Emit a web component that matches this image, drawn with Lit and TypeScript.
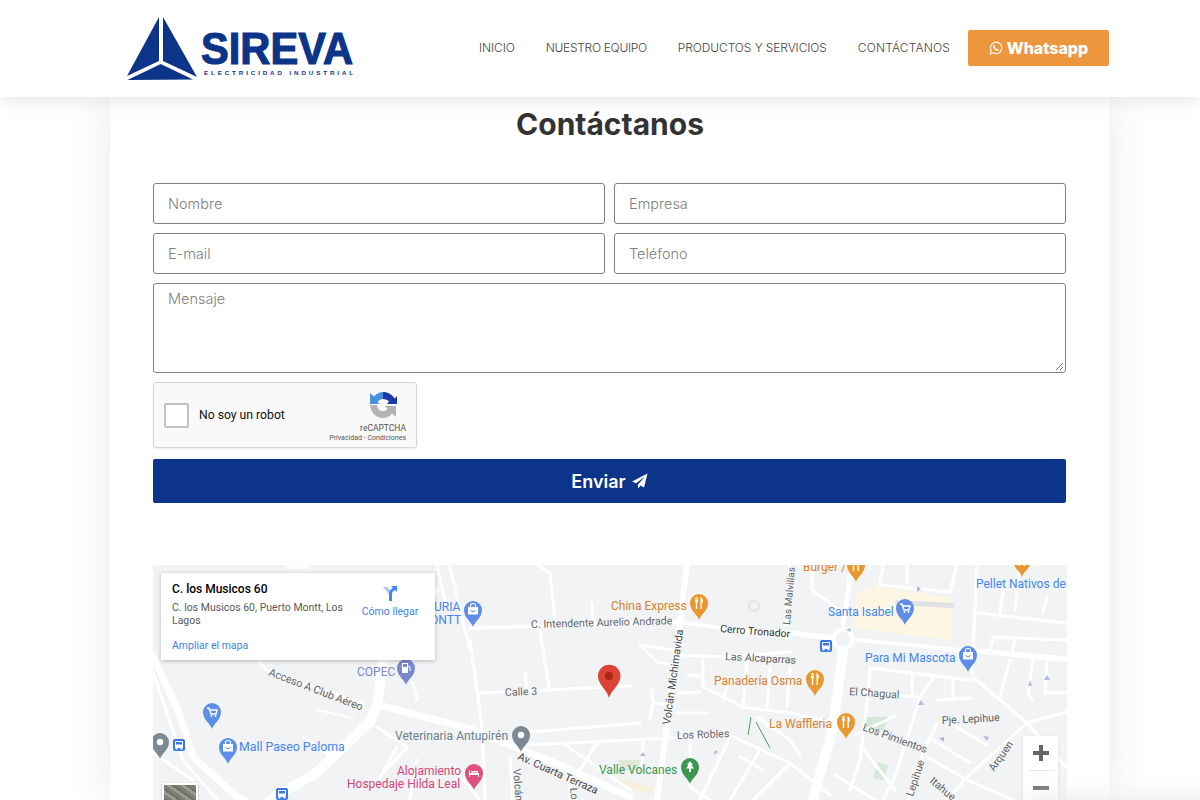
import { LitElement, html, svg, css } from "lit";
import { customElement } from "lit/decorators.js";

const roads: [number, string][] = [
  [7, "M153 657L180 715L193 757L237 797L245 800"],
  [3, "M153 672L183 760L217 800"],
  [3, "M153 753L193 780"],
  [10, "M383 660L377 705L370 722L316 773L270 800"],
  [5, "M383 660L420 625L437 590"],
  [3, "M450 567L460 610L470 650"],
  [3, "M437 565L447 610"],
  [7, "M383 706L470 729L560 765L630 797"],
  [6, "M687 565L680 622L667 727L657 800"],
  [4, "M470 628L680 622L790 638"],
  [5, "M780 632L833 638"],
  [4, "M857 640L1066 660"],
  [10, "M843 650L833 727L813 800"],
  [5, "M852 565L843 625"],
  [3, "M480 693L630 686"],
  [3, "M525 672L527 690"],
  [3, "M538 565L550 573L555 620"],
  [3, "M540 630L549 688"],
  [3, "M592 603L593 622"],
  [3, "M470 640L482 727L485 800"],
  [3, "M530 732L640 723"],
  [3, "M527 745L670 738L730 735L790 763L830 795"],
  [3, "M640 645L657 662L670 665"],
  [3, "M640 645L673 650M680 655L725 657L790 652"],
  [3, "M703 660L703 687L743 707L790 713L832 722"],
  [3, "M688 675L703 677"],
  [3, "M747 660L743 707M770 667L767 707M790 667L787 707M727 687L723 700"],
  [3, "M652 690L653 703L650 718M655 703L667 705M677 713L708 713M678 693L700 692"],
  [3, "M757 717L790 740L800 755"],
  [3, "M730 737L700 800M760 750L730 800M790 763L753 800M740 757L763 770"],
  [3, "M690 740L690 787L710 800"],
  [3, "M597 743L580 770M643 742L642 767M563 743L630 790"],
  [3, "M510 757L513 800M570 780L570 800"],
  [3, "M870 670L867 703L860 760L850 790"],
  [3, "M870 668L970 680"],
  [3, "M912 673L912 695M867 693L917 697"],
  [3, "M933 678L920 697L895 777L883 800"],
  [3, "M953 680L953 697M937 700L972 698"],
  [3, "M973 677L1027 723L1066 767"],
  [3, "M1027 723L967 777L947 800"],
  [3, "M937 723L920 760L908 800M950 723L987 745M933 740L970 763M927 757L967 780L1013 800"],
  [3, "M1027 723L1066 712M1010 660L1000 697"],
  [3, "M977 567L972 673"],
  [3, "M977 613L1066 623"],
  [3, "M993 637L1066 640M993 637L990 650M1015 640L1012 653"],
  [3, "M977 650L1066 658"],
  [3, "M1033 660L1028 693L1032 700M1047 660L1045 693L1066 693"],
  [3, "M1047 597L1043 613M1003 590L1000 613"],
  [3, "M883 565L880 585L950 592L957 565M907 565L907 583"],
  [3, "M1020 565L1015 610"],
  [3, "M790 565L786 625M812 565L812 590L840 610"],
  [3, "M855 735L895 716"],
  [3, "M860 745L895 790M835 775L875 800"],
  [3, "M260 663L270 673L363 703"],
  [2, "M317 710L353 718"],
  [3, "M303 737L337 760"],
  [3, "M377 727L407 747L383 773M397 747L377 783M417 760L410 800"],
  [3, "M413 683L417 700"],
  [3, "M287 567L307 567"],
  [3, "M455 770L480 800"],
];

function pin(x: number, y: number, color: string, glyph = "") {
  return svg`<g transform="translate(${x} ${y})">
    <path fill=${color} d="M0 17C-1.5 11.5-9 8-9 0A9 9 0 0 1 9 0C9 8 1.5 11.5 0 17Z"></path>
    ${glyph === "cart" ? svg`<path fill="none" stroke="#fff" stroke-width="1.4" d="M-5-4H-3L-1 2H4L5-2H-2.500"></path><circle cx="-.5" cy="4" r=".9" fill="#fff"></circle><circle cx="3.500" cy="4" r=".9" fill="#fff"></circle>` : ""}
    ${glyph === "bag" ? svg`<path fill="#fff" d="M-5-3H5V4.500H-5Z"></path><path fill="none" stroke="#fff" stroke-width="1.200" d="M-2.500-3V-4.500A2.500 2 0 0 1 2.500-4.500V-3"></path><path fill="none" stroke=${color} d="M-2.500 0.500Q0 3 2.500 0.500"></path>` : ""}
    ${glyph === "food" ? svg`<path fill="#fff" d="M-4-6H-3.400V-3H-2.800V-6H-2.200V-3H-1.600V-6H-1V-2C-1-1-1.500-.8-1.800-.6V6H-3.200V-.6C-3.500-.8-4-1-4-2ZM1.500 6V-6C3.500-5.500 4-3 4-.5H2.900V6Z"></path>` : ""}
    ${glyph === "dot" ? svg`<circle r="3.200" fill="#fff"></circle>` : ""}
    ${glyph === "tree" ? svg`<path fill="#fff" d="M0-6L3 -2H1.500L4 1.500H1V5H-1V1.500H-4L-1.500-2H-3Z"></path>` : ""}
    ${glyph === "bed" ? svg`<path fill="#fff" d="M-5-3H-4V0H5V4H4V2H-4V4H-5ZM-3-2H4V-.5H-3Z"></path>` : ""}
    ${glyph === "fuel" ? svg`<path fill="#fff" d="M-4-5H2V5H-4Z"></path><path fill=${color} d="M-3-4H1V-1H-3Z"></path><path fill="none" stroke="#fff" d="M2-2L4-1V3"></path>` : ""}
  </g>`;
}

function bus(x: number, y: number) {
  return svg`<g transform="translate(${x} ${y})">
    <rect x="-6" y="-6" width="12" height="12" rx="2" fill="#3b78e7"></rect>
    <rect x="-4" y="-4" width="8" height="7" rx="1" fill="#fff"></rect>
    <rect x="-3" y="-3" width="6" height="2.500" fill="#3b78e7"></rect>
    <rect x="-3.500" y="3" width="2" height="1.500" fill="#fff"></rect>
    <rect x="1.500" y="3" width="2" height="1.500" fill="#fff"></rect>
  </g>`;
}

const BLUE = "#4285f4";
const PINB = "#5e8ee8";
const ORG = "#d9822b";
const PINO = "#e8982f";
const GREY = "#5f6368";

type Label = [string, number, number, string, number?, number?];
const labels: Label[] = [
  ["URIA", 434, 611, BLUE, 12],
  ["ONTT", 430, 624, BLUE, 12],
  ["COPEC", 357, 676, "#7b88cc", 12],
  ["Mall Paseo Paloma", 239, 751, BLUE, 12.3],
  ["Veterinaria Antupirén", 395, 740, "#6b7f8c", 12.1],
  ["Alojamiento", 397, 775, "#d9447a", 12],
  ["Hospedaje Hilda Leal", 347, 788, "#d9447a", 12],
  ["China Express", 611, 610, ORG, 12],
  ["Panadería Osma", 714, 685, ORG, 12],
  ["La Waffleria", 769, 728, ORG, 12],
  ["Valle Volcanes", 599, 774, "#3c9650", 12],
  ["Burger /", 803, 571, ORG, 12],
  ["Santa Isabel", 828, 616, BLUE, 12],
  ["Para Mi Mascota", 865, 662, BLUE, 12],
  ["Pellet Nativos de", 976, 588, BLUE, 12],
  ["C. Intendente Aurelio Andrade", 531, 628, GREY, 10.7, -1.5],
  ["Cerro Tronador", 720, 632, "#333", 10.5, 4.5],
  ["Las Alcaparras", 725, 660, GREY, 10.7, 3],
  ["Calle 3", 505, 696, GREY, 10.7, -2],
  ["Los Robles", 677, 739, GREY, 10.7, -2],
  ["El Chagual", 849, 695, GREY, 10.7, 4],
  ["Los Pimientos", 862, 730, GREY, 10.7, 20],
  ["Pje. Lepihue", 942, 724, GREY, 10.7, -3],
  ["Acceso A Club Aéreo", 268, 675, GREY, 10.7, 21],
  ["Av. Cuarta Terraza", 517, 759, "#444", 10.7, 24],
  ["Volcán Michimavida", 670, 725, "#444", 10.7, -82],
  ["Las Malvillas", 790, 625, GREY, 10, -85],
  ["Lepihue", 913, 797, GREY, 10.7, -72],
  ["Itahue", 929, 782, GREY, 10.7, 40],
  ["Arquen", 994, 772, GREY, 10.7, -55],
  ["Volcán", 513, 769, GREY, 10.7, 85],
  ["Lo", 570, 788, GREY, 10.7, 85],
];

@customElement("app-root")
export class AppRoot extends LitElement {
  static styles = css`
    :host { display: block; height: 800px; overflow: hidden; background: #fff; font-family: "Inter", "Liberation Sans", sans-serif; position: relative; }
    header { position: relative; z-index: 2; height: 97px; background: #fff; box-shadow: 0 2px 20px rgba(0,0,0,.11); display: flex; align-items: center; padding: 0 91px 2px 126px; box-sizing: border-box; }
    .logo { display: block; width: 230px; height: 70px; margin-top: -1px; }
    .logo-name { font-family: "Liberation Sans", sans-serif; font-weight: 700; font-size: 44.500px; fill: #0c3489; stroke: #0c3489; stroke-width: 1.2px; }
    .logo-sub { font-family: "Liberation Sans", sans-serif; font-weight: 700; font-size: 6.2px; fill: #0c3489; letter-spacing: 2.9px; }
    nav { margin-left: auto; display: flex; align-items: center; font-size: 12px; font-weight: 300; color: #444; letter-spacing: -.1px; }
    nav a { white-space: nowrap; }
    nav a + a { margin-left: 31px; }
    nav a:nth-child(2) { letter-spacing: -.3px; }
    nav a:nth-child(4) { letter-spacing: .15px; }
    .wa { margin-left: 18px; width: 141px; height: 36px; background: #ec973e; border-radius: 2px; color: #fff; font-weight: 800; font-size: 16px; letter-spacing: 0; display: flex; align-items: center; justify-content: center; gap: 4px; }
    .wa svg { width: 14px; height: 14px; }
    main { width: 999px; margin: 0 0 0 110px; height: 703px; padding: 0 42px 0 43px; box-sizing: border-box; background: #fff; box-shadow: 0 0 45px rgba(0,0,0,.09); position: relative; z-index: 1; }
    h1 { margin: 0; padding-top: 8px; height: 86px; box-sizing: border-box; text-align: center; font-size: 30px; font-weight: 700; line-height: 38px; color: #333; }
    form { display: grid; grid-template-columns: 452px 452px; column-gap: 9px; row-gap: 9px; }
    .field { height: 41px; box-sizing: border-box; border: 1px solid #7a8188; border-radius: 3px; padding: 0 14px; display: flex; align-items: center; color: #808080; font-size: 14.500px; font-weight: 300; }
    .area { grid-column: 1 / 3; height: 90px; align-items: flex-start; padding-top: 6px; position: relative; }
    .grip { position: absolute; right: 1px; bottom: 1px; width: 9px; height: 9px; }
    .captcha { grid-column: 1 / 3; width: 264px; height: 66px; box-sizing: border-box; background: #f9f9f9; border: 1px solid #d6d6d6; border-radius: 3px; box-shadow: 0 1px 2px rgba(0,0,0,.08); display: flex; align-items: center; padding-left: 10px; font-family: Roboto, sans-serif; }
    .check { width: 25px; height: 25px; box-sizing: border-box; border: 2px solid #c1c1c1; border-radius: 2px; background: #fff; }
    .robot { margin-left: 10px; font-size: 12.200px; color: #111; }
    .rc { margin-left: auto; margin-right: 10px; width: 60px; display: flex; flex-direction: column; align-items: flex-end; color: #555; font-size: 8.500px; line-height: 10px; padding-top: 3px; }
    .rc svg { width: 30px; height: 30px; margin: 0 8px 3px 0; }
    .rc small { font-size: 7px; line-height: 9px; white-space: nowrap; margin-top: 1px; }
    .send { grid-column: 1 / 3; height: 44px; margin-top: 2px; background: #0c348a; border-radius: 2px; color: #fff; display: flex; align-items: center; justify-content: center; gap: 6px; font-size: 18px; font-weight: 600; }
    .send svg { width: 16px; height: 16px; }
    .map { position: relative; margin-top: 62px; width: 914px; height: 235px; overflow: hidden; background: #f1f3f4; }
    .map > svg { display: block; font-family: Roboto, sans-serif; }
    .info { position: absolute; left: 8px; top: 8px; width: 274px; height: 87px; box-sizing: border-box; background: #fff; box-shadow: 0 1px 4px rgba(0,0,0,.25); padding: 9px 11px; font-family: Roboto, sans-serif; font-size: 10.500px; line-height: 12.500px; color: #5b5b5b; }
    .info b { display: block; font-size: 12px; font-weight: 500; color: #000; line-height: 14px; margin-bottom: 6px; }
    .addr { width: 180px; }
    .info a { display: block; color: #3f7fe8; }
    .big { margin-top: 13px; }
    .dir { position: absolute; left: 196px; top: 12px; width: 66px; text-align: center; }
    .dir svg { display: block; width: 18px; height: 18px; margin: 0 auto 3px; }
    .zoom { position: absolute; left: 870px; top: 171px; width: 35px; height: 70px; background: #fff; box-shadow: 0 1px 3px rgba(0,0,0,.12); display: flex; flex-direction: column; align-items: center; }
    .zoom svg { width: 18px; height: 18px; }
    .zoom i { width: 24px; height: 1px; background: #e6e6e6; margin: 8px 0; }
    .zoom svg:first-child { margin-top: 8px; }
    .thumb { position: absolute; left: 9px; top: 218px; width: 36px; height: 36px; box-sizing: border-box; border: 2px solid #fff; background: repeating-linear-gradient(35deg, #7f7d70 0 3px, #9a9a8e 3px 6px, #6f6f66 6px 8px); box-shadow: 0 1px 2px rgba(0,0,0,.3); }
    .veil { position: absolute; z-index: 3; left: 1030px; top: 800px; width: 220px; height: 40px; box-shadow: 0 0 24px 3px #ececec; background: #ececec; }
  `;

  render() {
    return html`
      <header>
        <svg class="logo" viewBox="126 12 230 70" role="img" aria-label="Sireva">
          <path fill="#0c3489" d="M159 17V61L127 76ZM163 17V61L197 77ZM160.700 64L193 79.500L127.500 80Z"></path>
          <text class="logo-name" x="201" y="64" textLength="152" lengthAdjust="spacingAndGlyphs">SIREVA</text>
          <text class="logo-sub" x="204" y="75">ELECTRICIDAD INDUSTRIAL</text>
        </svg>
        <nav>
          <a>INICIO</a><a>NUESTRO EQUIPO</a><a>PRODUCTOS Y SERVICIOS</a><a>CONTÁCTANOS</a>
          <div class="wa">
            <svg viewBox="0 0 16 16" fill="none" stroke="#fff" stroke-width="1.300"><path d="M1.500 14.500L2.500 11A6.500 6.500 0 1 1 5 13.500Z"></path><path fill="#fff" stroke="none" d="M5.800 4.500C6.500 4.200 6.800 5.800 7 6.300L6.500 7.300C7 8.200 7.800 9 8.800 9.400L9.700 8.600L11.200 9.500C11.200 10.500 10 11.300 9 11C6.800 10.500 5 8.500 4.500 6.500C4.400 5.700 5 4.700 5.800 4.500Z"></path></svg>
            Whatsapp
          </div>
        </nav>
      </header>
      <main>
        <h1>Contáctanos</h1>
        <form>
          <div class="field">Nombre</div>
          <div class="field">Empresa</div>
          <div class="field">E-mail</div>
          <div class="field">Teléfono</div>
          <div class="field area">Mensaje
            <svg class="grip" viewBox="0 0 9 9" stroke="#777" fill="none"><path d="M1 8L8 1M5 8L8 5"></path></svg>
          </div>
          <div class="captcha">
            <div class="check"></div>
            <div class="robot">No soy un robot</div>
            <div class="rc">
              <svg viewBox="0 0 30 30">
                <path fill="#b3b3b3" d="M2 15H9C9.500 19 12 21 15 21C17 21 18.500 20 19.500 19L16.500 16H28V27L24 23.500C21.500 26.500 18.500 28 15 28C8 28 2.500 22 2 15Z"></path>
                <path fill="#4a90e2" d="M2 14V3L6 6.500C8.500 3.500 11.500 2 15 2V9C12.500 9 10.500 10.500 9.500 12.500L12 14Z"></path>
                <path fill="#1c3aa9" d="M15 2C20 2 24 4.500 26.500 8.500L29 6V14H19L21 11.500C19.500 10 17.500 9 15 9Z"></path>
              </svg>
              reCAPTCHA
              <small>Privacidad - Condiciones</small>
            </div>
          </div>
          <div class="send">Enviar
            <svg viewBox="0 0 16 16" fill="#fff"><path d="M15.500.5L0 8.500L4 10.300L13 3.500L6 11.500V15.500L8.500 12.500L12 14.500Z"></path></svg>
          </div>
        </form>
        <div class="map">
          <svg width="914" height="235" viewBox="153 565 914 235">
            <path fill="#fdf6e3" d="M857 593L875 586L950 598L952 640L853 628Z"></path>
            <path fill="#d5e8d8" d="M866 717H888L884 730H864ZM878 762L888 766L884 780L873 778Z"></path>
            <path fill="#e0e8d8" d="M618 760H640L638 770H620Z"></path>
            <path fill="#f6efdc" d="M620 778L655 788L652 794L618 785Z"></path>
            <rect x="895" y="600" width="60" height="5" rx="2.500" fill="#dfe1e4" transform="rotate(3 895 600)"></rect>
            <g fill="none" stroke="#fff" stroke-linecap="round" stroke-linejoin="round">
              ${roads.map(([w, d]) => svg`<path stroke-width=${w} d=${d}></path>`)}
            </g>
            <circle cx="843" cy="639" r="9.500" fill="#f1f3f4" stroke="#fff" stroke-width="4"></circle>
            <circle cx="754" cy="606" r="5" fill="none" stroke="#e0e2e5" stroke-width="2"></circle>
            <path stroke="#4b9e5f" fill="none" d="M751 717L748 735M756 722L770 748"></path>
            <g fill="#b4b9d9">
              <path d="M643 752L640 756H646ZM715 750L718 752L714 755ZM921 589L917 586V592ZM850 628L846 630L851 632ZM921 700L918 705H924ZM1030 680L1028 686H1032ZM1047 675L1044 680H1050ZM983 736L987 741L989 737ZM939 738L944 742V737Z"></path>
            </g>
            ${labels.map(([t, x, y, c, s, r]) => svg`<text x=${x} y=${y} fill=${c} font-size=${s ?? 12} transform=${r ? `rotate(${r} ${x} ${y})` : ""}>${t}</text>`)}
            ${pin(212, 712, PINB, "cart")}
            ${pin(228, 747, PINB, "bag")}
            ${pin(160, 742, "#7b8a94", "dot")}
            ${pin(473, 610, PINB, "bag")}
            ${pin(406, 668, "#7b88cc", "fuel")}
            ${pin(521, 735, "#7b8a94", "dot")}
            ${pin(474, 773, "#e0507d", "bed")}
            ${pin(699, 603, PINO, "food")}
            ${pin(815, 679, PINO, "food")}
            ${pin(846, 722, PINO, "food")}
            ${pin(856, 565, PINO, "food")}
            ${pin(1022, 560, PINO, "food")}
            ${pin(905, 608, PINB, "cart")}
            ${pin(968, 655, PINB, "bag")}
            ${pin(690, 767, "#3c9650", "tree")}
            ${bus(179, 745)}
            ${bus(282, 794)}
            ${bus(826, 646)}
            <path fill="#db4437" d="M609 698C607.500 690 598 685 598 676A11.200 11.200 0 0 1 620.500 676C620.500 685 611 690 609 698Z"></path>
            <circle cx="609" cy="676" r="4" fill="#a52714"></circle>
          </svg>
          <div class="info">
            <b>C. los Musicos 60</b>
            <div class="addr">C. los Musicos 60, Puerto Montt, Los Lagos</div>
            <a class="big">Ampliar el mapa</a>
            <a class="dir">
              <svg viewBox="0 0 18 18"><path fill="#a8c7fa" d="M2 2H6.500L11 8V16H8V9Z"></path><path fill="#4285f4" d="M8 16H11V9C11 7 12.500 5.500 14 5L16 7V1H10L12 3C9.500 4 8 6.500 8 9Z"></path></svg>
              Cómo llegar
            </a>
          </div>
          <div class="zoom">
            <svg viewBox="0 0 18 18" fill="#666"><path d="M7 1H11V7H17V11H11V17H7V11H1V7H7Z"></path></svg>
            <i></i>
            <svg viewBox="0 0 18 18" fill="#666"><rect x="1" y="7" width="16" height="4"></rect></svg>
          </div>
          <div class="thumb"></div>
        </div>
      </main>
      <div class="veil"></div>
    `;
  }
}
